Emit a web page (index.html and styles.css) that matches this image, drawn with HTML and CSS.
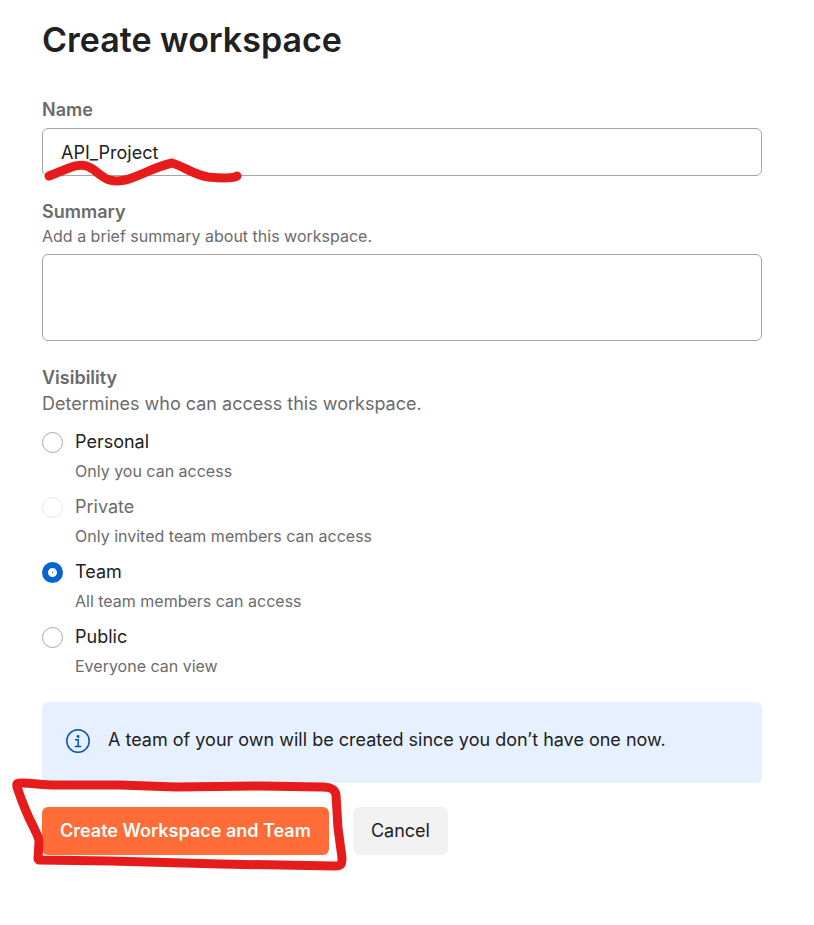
FILE: index.html
```html
<!DOCTYPE html>
<html lang="en">
<head>
    <meta charset="UTF-8" />
    <meta name="viewport" content="width=device-width, initial-scale=1.0"/>
    <title>Create workspace</title>
    <link rel="stylesheet" href="styles.css">
</head>
<body>
    <main class="page">
        <h1 class="title">Create workspace</h1>
        <form class="form">
            <div class="field">
                <label class="label" for="name">Name</label>
                <div class="input-wrap">
                    <input class="input" type="text" id="name" value="API_Project">
                    <svg class="mark mark-underline" viewBox="0 0 210 40" aria-hidden="true">
                        <path d="M12 27L32 19C42 15 49 15 57 21C68 30 73 34 88 31C101 28 117 18 135 14C146 17 157 26 171 28C182 29 194 29 198 28L200 27"/>
                    </svg>
                </div>
            </div>

            <div class="field">
                <label class="label" for="summary">Summary</label>
                <p class="hint" id="summaryHint">Add a brief summary about this workspace.</p>
                <textarea class="input textarea" id="summary" aria-describedby="summaryHint"></textarea>
            </div>

            <fieldset class="visibility">
                <legend class="label">Visibility</legend>
                <p class="lead">Determines who can access this workspace.</p>
                <div class="options">
                    <div class="option">
                        <input class="radio" type="radio" name="visibility" id="personal">
                        <label class="option-name" for="personal">Personal</label>
                        <p class="option-hint">Only you can access</p>
                    </div>
                    <div class="option">
                        <input class="radio" type="radio" name="visibility" id="private" disabled>
                        <label class="option-name" for="private">Private</label>
                        <p class="option-hint">Only invited team members can access</p>
                    </div>
                    <div class="option">
                        <input class="radio" type="radio" name="visibility" id="team" checked>
                        <label class="option-name" for="team">Team</label>
                        <p class="option-hint">All team members can access</p>
                    </div>
                    <div class="option">
                        <input class="radio" type="radio" name="visibility" id="public">
                        <label class="option-name" for="public">Public</label>
                        <p class="option-hint">Everyone can view</p>
                    </div>
                </div>
            </fieldset>

            <div class="banner">
                <svg class="banner-icon" viewBox="0 0 24 24" aria-hidden="true">
                    <circle cx="12" cy="12" r="11.2"/>
                    <path d="M9 10.8h3.2v6.6M8.8 17.4h6.4"/>
                    <circle class="dot" cx="12" cy="7.5" r="1.4"/>
                </svg>
                <p>A team of your own will be created since you don’t have one now.</p>
            </div>

            <div class="actions">
                <button class="button button-primary" type="button">Create Workspace and Team</button>
                <button class="button" type="button">Cancel</button>
                <svg class="mark mark-box" viewBox="0 0 346 100" aria-hidden="true">
                    <path d="M38 79L39 62C39 57 36 53 34 48C27 35 22 22 17 7C16 3 18 3 22 3C33 3 42 5 56 5L120 5L176 7L260 6L322 7C331 7 335 9 336 15L338 48L342 78C342 85 341 86 335 86L220 84L110 81L39 80"/>
                </svg>
            </div>
        </form>
    </main>
</body>
</html>
```
FILE: styles.css
```css
* {
    margin: 0;
    padding: 0;
    box-sizing: border-box;
}

:root {
    --text-color: #212121;
    --muted-color: #6b6b6b;
    --border-color: #a6a6a6;
    --blue: #0265d2;
    --orange: #ff6c37;
    --mark-color: #e61c1c;
}

body {
    background: #fff;
    color: var(--text-color);
    font-family: 'Inter', sans-serif;
    font-size: 18px;
    line-height: 24px;
}

.page {
    max-width: 814px;
    padding: 16px 52px 56px 42px;
}

.title {
    font-size: 34px;
    font-weight: 600;
    line-height: 48px;
    margin-bottom: 34px;
}

.field {
    display: flex;
    flex-direction: column;
    margin-bottom: 24px;
}

.label {
    color: var(--muted-color);
    font-weight: 600;
}

.input-wrap {
    position: relative;
    margin-top: 6px;
}

.input {
    display: block;
    width: 100%;
    height: 48px;
    padding: 0 18px;
    background: #fff;
    border: 1px solid var(--border-color);
    border-radius: 6px;
    color: var(--text-color);
    font: inherit;
}

.textarea {
    height: 87px;
    margin-top: 6px;
    padding: 12px 18px;
    resize: none;
}

.hint,
.option-hint {
    color: var(--muted-color);
    font-size: 16px;
}

.visibility {
    margin-top: 25px;
    border: none;
}

.lead {
    color: var(--muted-color);
    margin-top: 2px;
}

.options {
    display: grid;
    gap: 12px;
    margin-top: 14px;
}

.option {
    display: grid;
    grid-template-columns: 21px 1fr;
    column-gap: 12px;
    row-gap: 5px;
    align-items: center;
}

.option-hint {
    grid-column: 2;
}

.radio {
    appearance: none;
    width: 21px;
    height: 21px;
    background: #fff;
    border: 1px solid var(--border-color);
    border-radius: 50%;
}

.radio:checked {
    border: 6px solid var(--blue);
    background: linear-gradient(var(--blue), var(--blue)) center / 1px 1px no-repeat #fff;
}

.radio:disabled {
    border-color: #e6e6e6;
}

.radio:disabled + .option-name {
    color: var(--muted-color);
}

.banner {
    display: flex;
    gap: 18px;
    min-height: 81px;
    margin: 24px 0;
    padding: 26px 24px;
    background: #e6f0ff;
    border-radius: 6px;
}

.banner-icon {
    flex: none;
    width: 24px;
    height: 24px;
    margin-top: 1px;
    fill: none;
    stroke: #0053b8;
    stroke-width: 1.5;
}

.banner-icon .dot {
    fill: #0053b8;
    stroke: none;
}

.actions {
    position: relative;
    display: flex;
    gap: 24px;
}

.button {
    height: 48px;
    padding: 0 18px;
    background: #f2f2f2;
    border: none;
    border-radius: 6px;
    color: var(--text-color);
    font: inherit;
    cursor: pointer;
}

.button-primary {
    background: var(--orange);
    color: #fff;
    font-weight: 600;
}

/* Hand-drawn red marks over the form */
.mark {
    position: absolute;
    fill: none;
    stroke: var(--mark-color);
    stroke-width: 9;
    stroke-linecap: round;
    stroke-linejoin: round;
    pointer-events: none;
}

.mark-underline {
    top: 21px;
    left: -5px;
    width: 210px;
    height: 40px;
}

.mark-box {
    top: -27px;
    left: -42px;
    width: 346px;
    height: 100px;
    overflow: visible;
}
```
